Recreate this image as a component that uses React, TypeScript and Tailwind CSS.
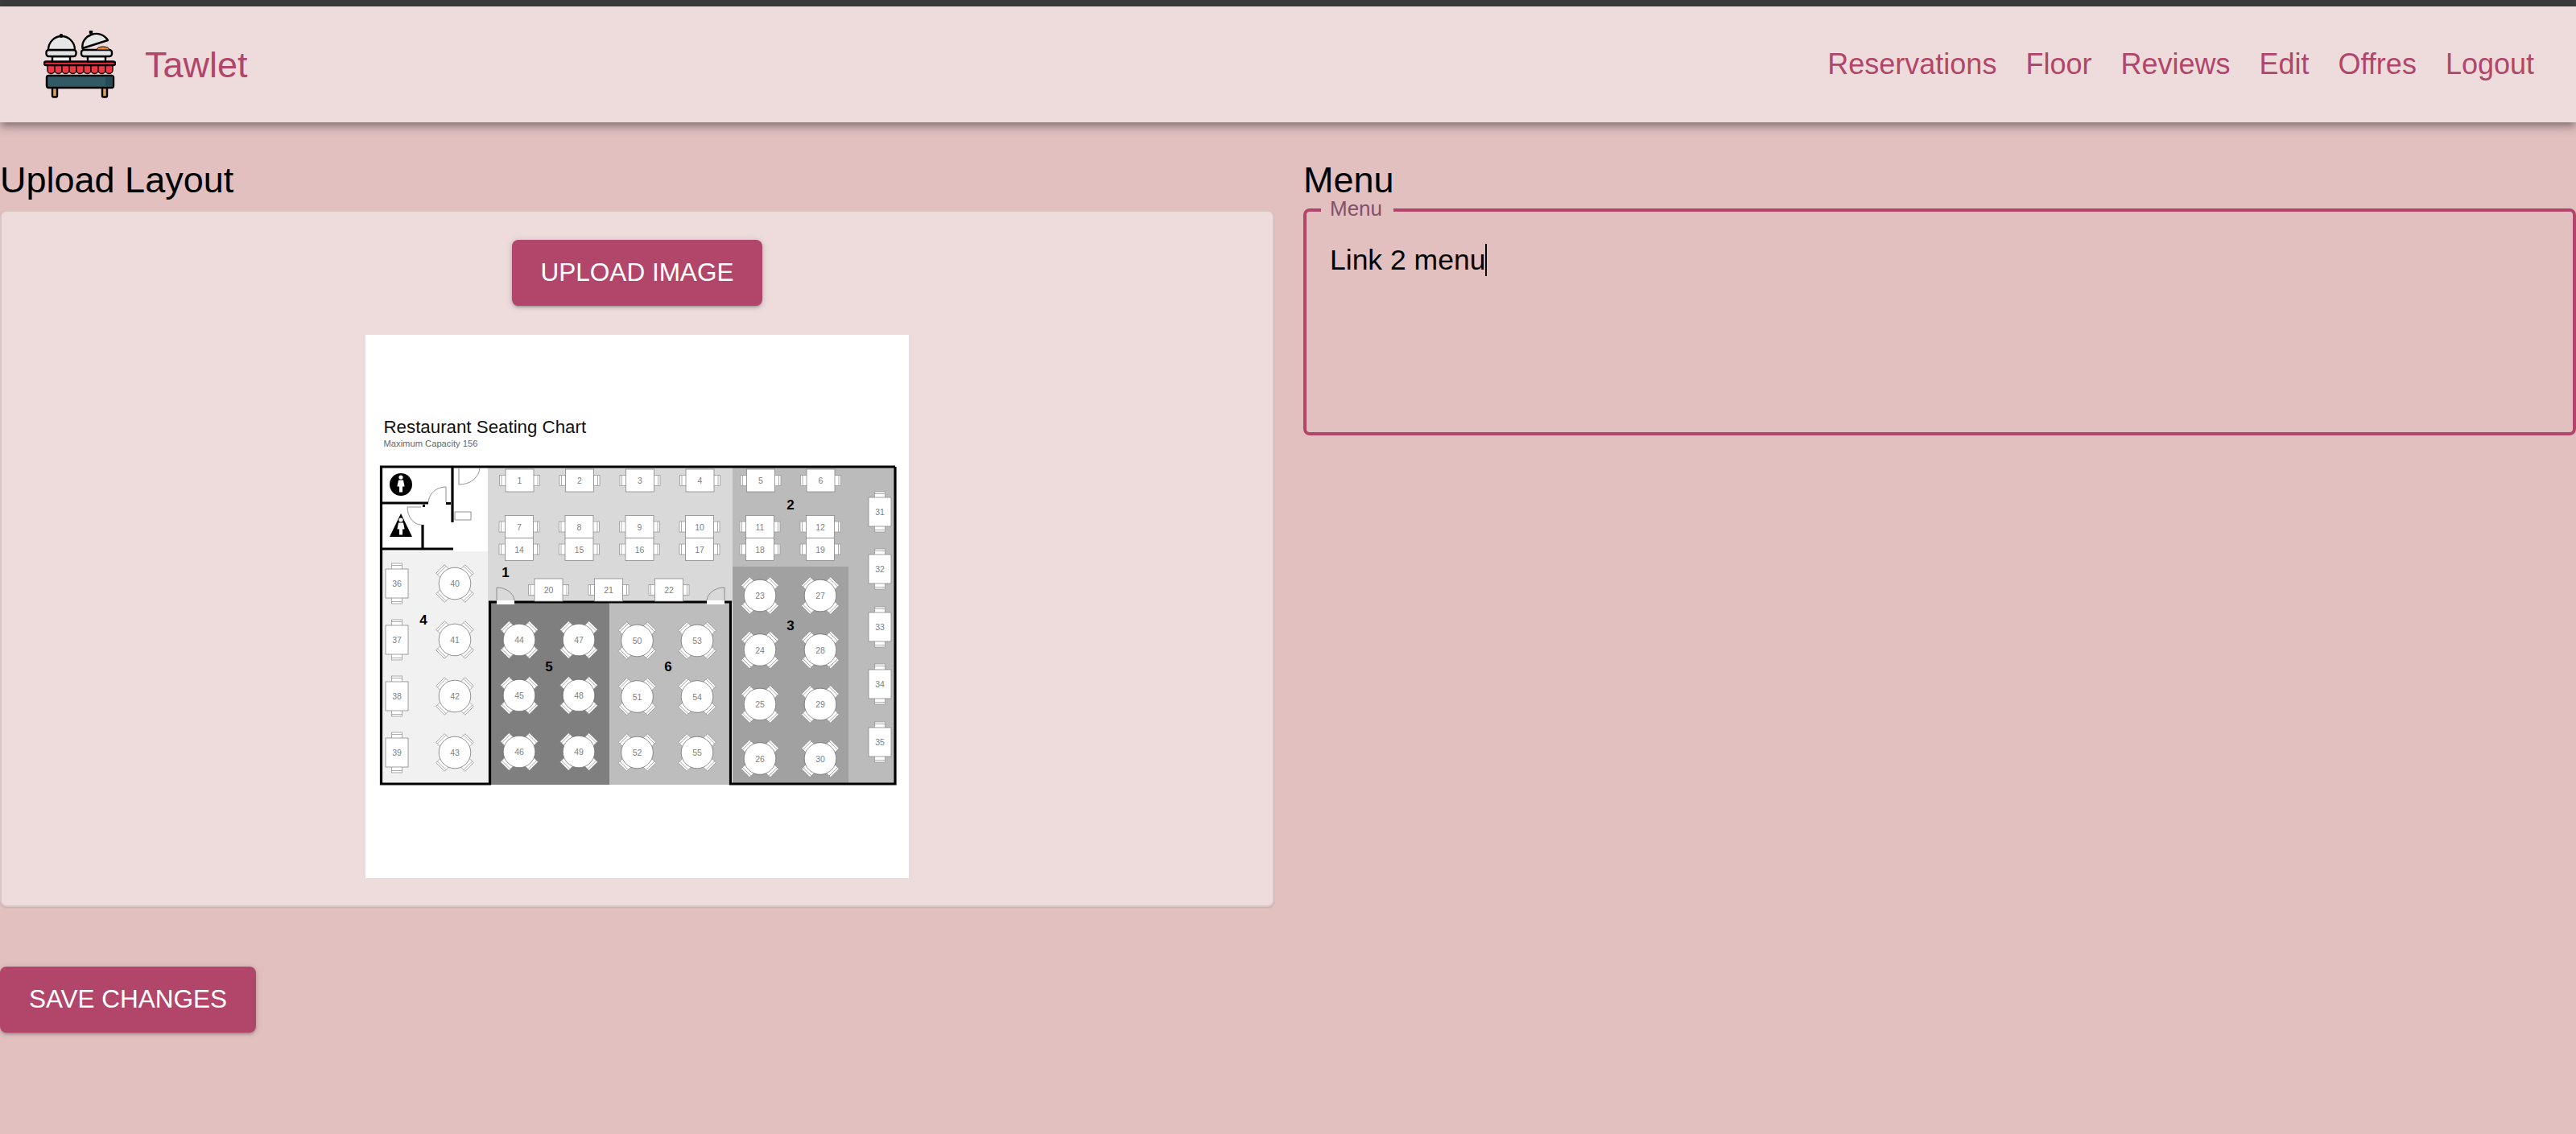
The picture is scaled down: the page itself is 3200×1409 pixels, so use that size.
import React from 'react';

const navLinks = ['Reservations', 'Floor', 'Reviews', 'Edit', 'Offres', 'Logout'];

const rectTables = [
  { n: 1, x: 191.5, y: 181 }, { n: 2, x: 266, y: 181 }, { n: 3, x: 341, y: 181 }, { n: 4, x: 415.5, y: 181 },
  { n: 5, x: 491, y: 181 }, { n: 6, x: 565.5, y: 181 },
  { n: 7, x: 191, y: 238.5 }, { n: 8, x: 265.5, y: 238.5 }, { n: 9, x: 340.5, y: 238.5 }, { n: 10, x: 415, y: 238.5 },
  { n: 11, x: 490, y: 238.5 }, { n: 12, x: 565, y: 238.5 },
  { n: 14, x: 191, y: 266.5 }, { n: 15, x: 265.5, y: 266.5 }, { n: 16, x: 340.5, y: 266.5 }, { n: 17, x: 415, y: 266.5 },
  { n: 18, x: 490, y: 266.5 }, { n: 19, x: 565, y: 266.5 },
  { n: 20, x: 227.5, y: 317 }, { n: 21, x: 302, y: 317 }, { n: 22, x: 377, y: 317 },
];

const sideTables = [
  { n: 31, x: 639, y: 220 }, { n: 32, x: 639, y: 291 }, { n: 33, x: 639, y: 363 }, { n: 34, x: 639, y: 434 },
  { n: 35, x: 639, y: 506 }, { n: 36, x: 39, y: 309 }, { n: 37, x: 39, y: 379 }, { n: 38, x: 39, y: 449 },
  { n: 39, x: 39, y: 519 },
];

const roundTables = [
  { n: 40, x: 111, y: 309 }, { n: 41, x: 111, y: 379 }, { n: 42, x: 111, y: 449 }, { n: 43, x: 111, y: 519 },
  { n: 44, x: 191, y: 379 }, { n: 45, x: 191, y: 448 }, { n: 46, x: 191, y: 518 },
  { n: 47, x: 265, y: 379 }, { n: 48, x: 265, y: 448 }, { n: 49, x: 265, y: 518 },
  { n: 50, x: 337.5, y: 380 }, { n: 51, x: 337.5, y: 449.5 }, { n: 52, x: 337.5, y: 519 },
  { n: 53, x: 412, y: 380 }, { n: 54, x: 412, y: 449.5 }, { n: 55, x: 412, y: 519 },
  { n: 23, x: 490, y: 324 }, { n: 24, x: 490, y: 391.5 }, { n: 25, x: 490, y: 459 }, { n: 26, x: 490, y: 526.5 },
  { n: 27, x: 565, y: 324 }, { n: 28, x: 565, y: 391.5 }, { n: 29, x: 565, y: 459 }, { n: 30, x: 565, y: 526.5 },
];

const sectionLabels = [
  { n: 1, x: 174, y: 301 }, { n: 2, x: 528, y: 217 }, { n: 3, x: 528, y: 367 },
  { n: 4, x: 72, y: 360 }, { n: 5, x: 228, y: 418 }, { n: 6, x: 376, y: 418 },
];

// awning scallops of the logo
const scallops = [59, 68, 77, 86, 95, 104, 113, 122, 131];

const Person = ({ x, y }: { x: number; y: number }) => (
  <g fill="#fff">
    <circle cx={x} cy={y} r={2.6} />
    <path d={`M${x - 3},${y + 3.5} h6 l1.6,8 h-2.6 v7 h-4 v-7 h-2.6 z`} />
  </g>
);

const TableNumber = ({ x, y, n }: { x: number; y: number; n: number }) => (
  <text x={x} y={y + 4} fontSize={10.5} fill="#808080" textAnchor="middle" fontFamily="Liberation Sans, sans-serif">{n}</text>
);

const FloorPlan = () => (
  <svg viewBox="0 0 675 675" className="w-[675px] h-[675px] bg-white block">
    <text x={22.5} y={122} fontSize={22.3} fill="#111" fontFamily="Liberation Sans, sans-serif">Restaurant Seating Chart</text>
    <text x={22.5} y={139} fontSize={11.2} fill="#666" fontFamily="Liberation Sans, sans-serif">Maximum Capacity 156</text>

    {/* sections */}
    <rect x={18} y={269} width={136} height={289} fill="#f1f1f1" />
    <rect x={152} y={165} width={304} height={168} fill="#d9d9d9" />
    <rect x={456} y={165} width={202} height={393} fill="#bbbbbb" />
    <rect x={456} y={288} width={144} height={270} fill="#a1a1a1" />
    <rect x={155} y={333} width={148} height={226} fill="#7f7f7f" />
    <rect x={303} y={333} width={149} height={226} fill="#bdbdbd" />

    {/* walls */}
    <g fill="none" stroke="#000" strokeWidth={3.2}>
      <path d="M658,164 H19.5 V558 H154.5 V332 H453.5 V558 H658 V164" />
      <path d="M19,209 H78 M108,164 V233 M71,236 V267 M19,266 H109" />
    </g>
    <rect x={71} y={211} width={3} height={3} fill="#000" />
    <rect x={100} y={208} width={6} height={3} fill="#000" />
    <rect x={163} y={330} width={22} height={5} fill="#fff" />
    <rect x={424} y={330} width={22} height={5} fill="#fff" />

    {/* doors and sink */}
    <g fill="none" stroke="#777" strokeWidth={0.8}>
      <path d="M116,165 V186 C130,186 141,178 142,165" />
      <path d="M100,208 V189 C88,189 79,197 78,208" />
      <path d="M69,214 H52 C52,226 60,236 69,236" />
      <path d="M163,330 V314 C175,314 184,321 185,330" />
      <path d="M446,330 V314 C434,314 425,321 424,330" />
      <rect x={111} y={220} width={20} height={10} fill="#fff" />
    </g>

    {/* restroom signs */}
    <ellipse cx={44} cy={186} rx={14} ry={14} fill="#000" />
    <Person x={44} y={177} />
    <path d="M44,222 L58,251 H30 Z" fill="#000" />
    <Person x={44} y={230} />

    {/* tables with chairs left and right */}
    {rectTables.map(t => (
      <g key={t.n} stroke="#999" strokeWidth={0.8}>
        <rect x={t.x - 25} y={t.y - 6.5} width={8} height={13} fill="#fff" />
        <rect x={t.x + 17} y={t.y - 6.5} width={8} height={13} fill="#fff" />
        <path d={`M${t.x - 22.5},${t.y - 6.5} v13 M${t.x + 22.5},${t.y - 6.5} v13`} fill="none" />
        <rect x={t.x - 17.5} y={t.y - 14} width={35} height={28} fill="#fff" stroke="#888" />
        <g stroke="none"><TableNumber x={t.x} y={t.y} n={t.n} /></g>
      </g>
    ))}

    {/* tables with chairs top and bottom */}
    {sideTables.map(t => (
      <g key={t.n} stroke="#999" strokeWidth={0.8}>
        <rect x={t.x - 6.5} y={t.y - 25} width={13} height={8} fill="#fff" />
        <rect x={t.x - 6.5} y={t.y + 17} width={13} height={8} fill="#fff" />
        <path d={`M${t.x - 6.5},${t.y - 22.5} h13 M${t.x - 6.5},${t.y + 22.5} h13`} fill="none" />
        <rect x={t.x - 14} y={t.y - 18} width={28} height={36} fill="#fff" stroke="#888" />
        <g stroke="none"><TableNumber x={t.x} y={t.y} n={t.n} /></g>
      </g>
    ))}

    {roundTables.map(t => (
      <g key={t.n}>
        {[45, 135, 225, 315].map(a => (
          <g key={a} transform={`rotate(${a} ${t.x} ${t.y})`} stroke="#8c8c8c" strokeWidth={0.7}>
            <rect x={t.x - 7.5} y={t.y - 25.5} width={15} height={9} fill="#fff" />
            <path d={`M${t.x - 7.5},${t.y - 23} h15`} fill="none" />
          </g>
        ))}
        <circle cx={t.x} cy={t.y} r={19.8} fill="#fff" stroke="#666" strokeWidth={0.7} />
        <TableNumber x={t.x} y={t.y} n={t.n} />
      </g>
    ))}

    {sectionLabels.map(l => (
      <text key={l.n} x={l.x} y={l.y} fontSize={17} fontWeight={700} fill="#000" textAnchor="middle" fontFamily="Liberation Sans, sans-serif">{l.n}</text>
    ))}
  </svg>
);

const Logo = () => (
  <svg viewBox="54 38 90 84" className="w-[90px] h-[84px] shrink-0">
    <g stroke="#000" strokeWidth={2.4} strokeLinejoin="round">
      {/* legs */}
      <rect x={65} y={108} width={6} height={12.5} rx={1.5} fill="#d9a066" />
      <rect x={127} y={108} width={6} height={12.5} rx={1.5} fill="#d9a066" />
      {/* body */}
      <rect x={58} y={94} width={83} height={15} rx={2.5} fill="#325a66" />
      <rect x={131} y={95.2} width={8.8} height={12.6} fill="#234c57" stroke="none" />
      {/* awning */}
      {scallops.map(x => (
        <path key={x} d={`M${x},81 h9 v6.5 a4.5,4 0 0 1 -9,0 Z`} fill="#ee3644" strokeWidth={1.4} />
      ))}
      <rect x={55} y={76.5} width={88} height={4.5} rx={2} fill="#e8303f" />
      {/* left chafing dish */}
      <rect x={65} y={70} width={22} height={6.5} fill="#f2f2f2" />
      <rect x={57.5} y={62} width={37} height={8} rx={3} fill="#e4e4e4" />
      <path d="M60,62 A16.5,17 0 0 1 93,62 Z" fill="#e6e6e6" />
      <circle cx={76} cy={44.5} r={1.2} fill="#000" />
      {/* right chafing dish */}
      <rect x={109} y={70} width={22} height={6.5} fill="#f2f2f2" />
      <rect x={101} y={62} width={38} height={8} rx={3} fill="#e4e4e4" />
      <path d="M120,62 q1,-4 8,-4 q7,0 8,4 Z" fill="#f08a24" strokeWidth={1} />
      <path d="M102.5,60 C100,44 124,34 134,50 Z" fill="#e6e6e6" />
      <circle cx={113} cy={40} r={1.2} fill="#000" />
    </g>
  </svg>
);

const App = () => {
  return (
    <div className="min-h-screen w-full bg-[#e2c0c0] font-['Liberation_Sans',sans-serif] border-t-8 border-[#3c3c3c]">
      <header className="relative h-[144px] flex items-center justify-between pl-[54px] pr-[52px] bg-[#eedcdc] shadow-[0_4px_8px_-2px_rgba(0,0,0,0.3),0_8px_10px_rgba(0,0,0,0.14),0_2px_20px_rgba(0,0,0,0.12)]">
        <div className="flex items-center gap-9">
          <Logo />
          <span className="text-[45px] leading-none text-[#b2466a]">Tawlet</span>
        </div>
        <nav className="flex gap-9 text-[36px] leading-none text-[#b2466a]">
          {navLinks.map(link => (
            <a key={link}>{link}</a>
          ))}
        </nav>
      </header>

      <main className="grid grid-cols-[1583px_1fr] gap-x-[36px] pt-[58px]">
        <section>
          <h2 className="h-[51px] text-[45px] leading-[28px] text-black">Upload Layout</h2>
          <div className="flex flex-col items-center gap-[36px] pt-[35px] pb-[34px] rounded-lg bg-[#eedcdc] border-2 border-[#d9c5c5] shadow-[0_1px_2px_rgba(0,0,0,0.12)]">
            <button className="h-[82px] px-9 rounded-lg bg-[#b2466a] text-white text-[31.5px] uppercase shadow-[0_3px_3px_-2px_rgba(0,0,0,0.2),0_2px_4px_rgba(0,0,0,0.14),0_1px_10px_rgba(0,0,0,0.12)]">
              Upload Image
            </button>
            <FloorPlan />
          </div>
        </section>

        <section>
          <h2 className="h-[49px] text-[45px] leading-[28px] text-black">Menu</h2>
          <div className="relative h-[282px] rounded-lg border-4 border-[#b2466a] pl-[29px] pt-[36px] text-[35.5px] leading-[48px] text-black">
            <span className="absolute -top-[20px] left-[18px] pl-[11px] pr-[14px] bg-[#e2c0c0] text-[26px] leading-[32px] text-[#85506a]">Menu</span>
            Link 2 menu<span className="inline-block w-[2px] h-[40px] align-[-8px] bg-black" />
          </div>
        </section>
      </main>

      <button className="block mt-[74px] h-[82px] w-[318px] rounded-lg bg-[#b2466a] text-white text-[31.5px] uppercase shadow-[0_3px_3px_-2px_rgba(0,0,0,0.2),0_2px_4px_rgba(0,0,0,0.14),0_1px_10px_rgba(0,0,0,0.12)]">
        Save Changes
      </button>
    </div>
  );
};

export default App;
